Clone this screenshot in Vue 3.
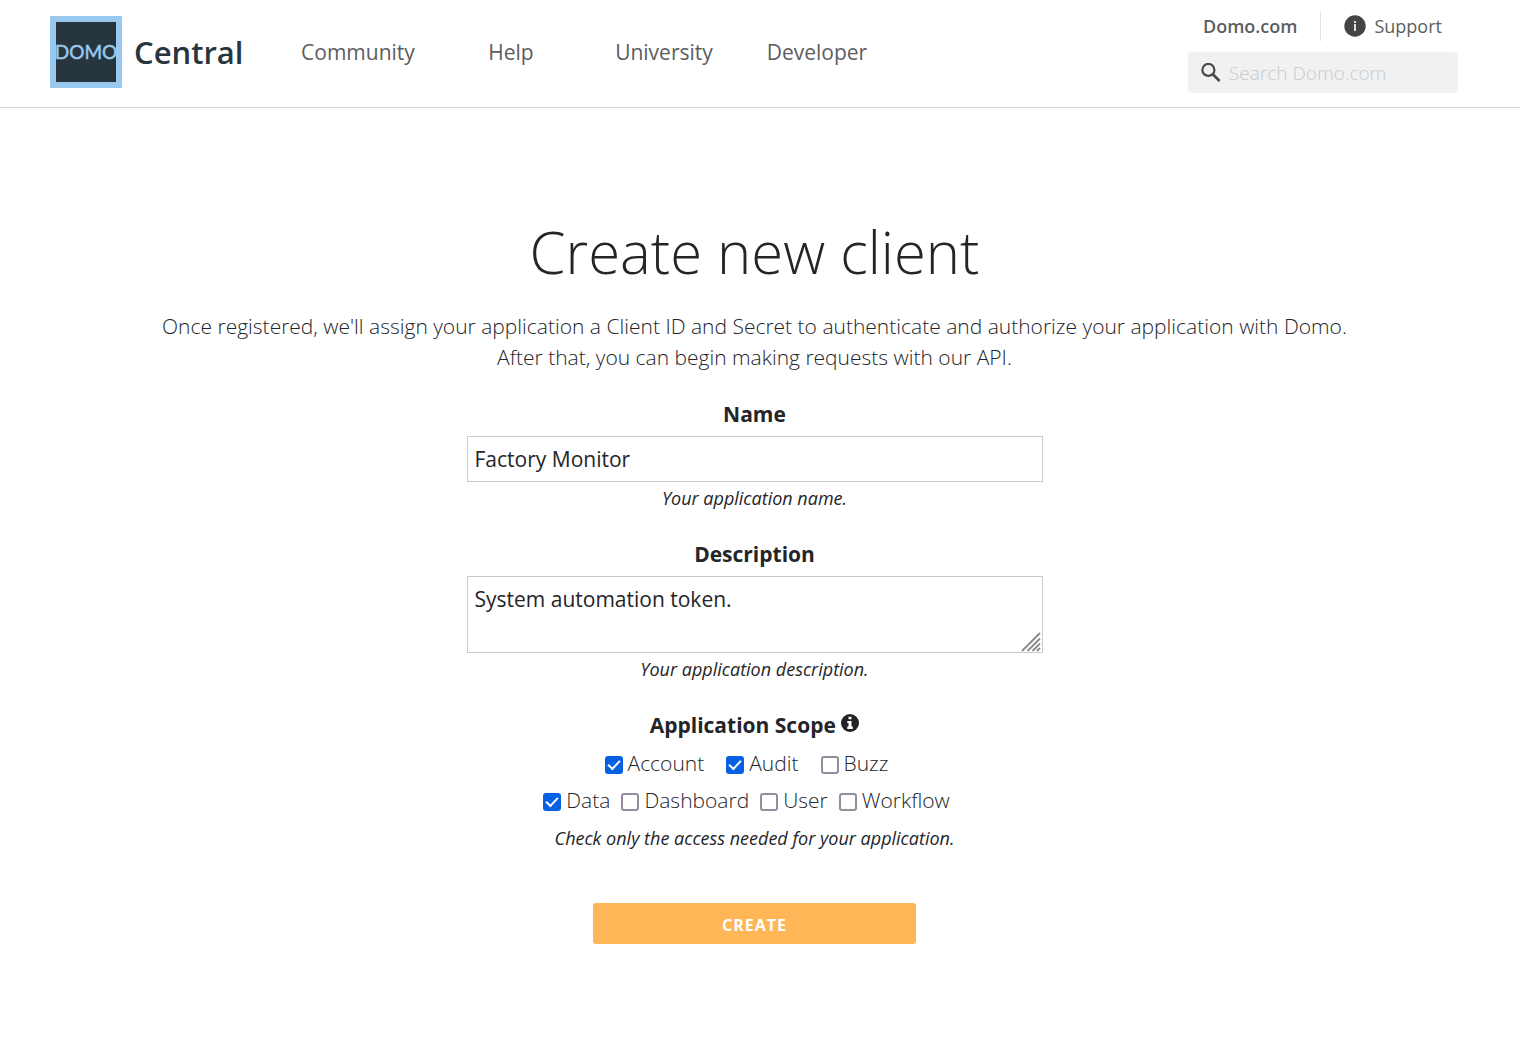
<script setup>
import { ref } from 'vue'

const links = ['Community', 'Help', 'University', 'Developer']
const search = ref('')
const name = ref('Factory Monitor')
const description = ref('System automation token.')
const scopeRows = ref([
  [
    { id: 'account', label: 'Account', checked: true },
    { id: 'audit', label: 'Audit', checked: true },
    { id: 'buzz', label: 'Buzz', checked: false }
  ],
  [
    { id: 'data', label: 'Data', checked: true },
    { id: 'dashboard', label: 'Dashboard', checked: false },
    { id: 'user', label: 'User', checked: false },
    { id: 'workflow', label: 'Workflow', checked: false }
  ]
])
</script>

<template>
  <header class="header">
    <a href="#" class="brand">
      <svg class="logo" viewBox="0 0 72 72" aria-hidden="true">
        <rect width="72" height="72" rx="1" fill="#99c9ee" />
        <rect x="6" y="6" width="60" height="60" fill="#27353e" />
        <text x="36" y="43" text-anchor="middle" class="logo-text" stroke="#99c9ee" stroke-width=".5">DOMO</text>
      </svg>
      <span class="brand-name">Central</span>
    </a>
    <nav class="nav">
      <a v-for="link in links" :key="link" href="#" class="nav-link">{{ link }}</a>
    </nav>
    <div class="tools">
      <div class="tool-links">
        <a href="#" class="domo-link">Domo.com</a>
        <a href="#" class="support">
          <svg width="22" height="22" viewBox="0 0 22 22" aria-hidden="true">
            <circle cx="11" cy="11" r="10.700" fill="#434446" />
            <rect x="10" y="6" width="2" height="2" fill="#ddd" />
            <rect x="10" y="9" width="2" height="7" fill="#ddd" />
          </svg>
          Support
        </a>
      </div>
      <label class="search">
        <svg width="20" height="20" viewBox="0 0 20 20" fill="none" stroke="#4a4a4c" aria-hidden="true">
          <circle cx="7.4" cy="6.9" r="6" stroke-width="2.2" />
          <path d="M11.8 11.300 18.600 17.900" stroke-width="2.800" />
        </svg>
        <input v-model="search" type="search" placeholder="Search Domo.com" aria-label="Search Domo.com" />
      </label>
    </div>
  </header>

  <main class="main">
    <h1 class="title">Create new client</h1>
    <p class="intro">
      Once registered, we'll assign your application a Client ID and Secret to authenticate and authorize your application with Domo.<br />
      After that, you can begin making requests with our API.
    </p>
    <form class="form" @submit.prevent>
      <div class="field">
        <label for="name" class="label">Name</label>
        <input id="name" v-model="name" type="text" class="control" />
        <p class="hint">Your application name.</p>
      </div>
      <div class="field">
        <label for="description" class="label">Description</label>
        <div class="area">
          <textarea id="description" v-model="description" class="control textarea"></textarea>
          <svg class="grip" width="20" height="20" viewBox="0 0 20 20" stroke="#8a8a8a" stroke-width="1.8" aria-hidden="true">
            <path d="M1 19 19 1M6.500 19 19 6.500M11.500 19 19 11.500M16 19 19 16" />
          </svg>
        </div>
        <p class="hint">Your application description.</p>
      </div>
      <fieldset class="field scope">
        <legend class="label">
          Application Scope
          <svg class="info" width="18" height="18" viewBox="0 0 18 18" aria-hidden="true">
            <circle cx="9" cy="9" r="9" fill="#222226" />
            <path d="M7.500 2.800h3v2.500h-3zM6.300 7h4.200v5.500h1.300V15H6.300v-2.500h1.200V9H6.300z" fill="#fff" />
          </svg>
        </legend>
        <div class="scope-rows">
          <div v-for="(row, i) in scopeRows" :key="i" class="scope-row" :class="{ tight: row.length > 3 }">
            <label v-for="item in row" :key="item.id" class="option">
              <input v-model="item.checked" type="checkbox" />
              {{ item.label }}
            </label>
          </div>
        </div>
        <p class="hint">Check only the access needed for your application.</p>
      </fieldset>
      <button type="submit" class="submit">CREATE</button>
    </form>
  </main>
</template>

<style>
body {
  margin: 0;
  background: #fff;
}
</style>

<style scoped>
.header,
.main,
.main input,
.main textarea,
.main button,
.search input {
  font-family: "Open Sans", "Noto Sans", sans-serif;
}
a {
  color: inherit;
  text-decoration: none;
}
.header {
  box-sizing: border-box;
  display: flex;
  align-items: flex-start;
  height: 108px;
  padding: 0 62px 0 50px;
  border-bottom: 1px solid #d2d2d2;
  color: #5c5d60;
}
.brand {
  display: flex;
  align-items: center;
  gap: 12px;
  margin-top: 16px;
}
.logo {
  width: 72px;
  height: 72px;
}
.logo-text {
  font: 400 19px Lato, sans-serif;
  fill: #99c9ee;
}
.brand-name {
  color: #27353e;
  font-size: 31px;
  font-weight: 600;
  line-height: 40px;
}
.nav {
  display: flex;
  margin: 36px 0 0 38px;
  font-size: 21px;
  line-height: 32px;
}
.nav-link {
  width: 153px;
  text-align: center;
}
.tools {
  width: 270px;
  margin-left: auto;
}
.tool-links {
  display: flex;
  margin: 11px 0;
  padding-left: 15px;
  font-size: 18px;
  line-height: 30px;
}
.domo-link {
  padding-right: 23px;
  border-right: 1px solid #e2e2e2;
  font-weight: 600;
}
.support {
  display: flex;
  align-items: center;
  gap: 8px;
  padding-left: 23px;
}
.search {
  box-sizing: border-box;
  display: flex;
  align-items: center;
  gap: 8px;
  height: 41px;
  padding: 0 13px;
  border-radius: 4px;
  background: #f1f1f1;
}
.search svg {
  flex: none;
}
.search input {
  flex: 1;
  min-width: 0;
  padding: 0;
  border: 0;
  outline: 0;
  background: none;
  font-size: 19px;
  font-weight: 300;
  line-height: 28px;
}
.search input::placeholder {
  color: #c8cacf;
}
.main {
  padding: 103px 11px 64px 0;
  color: #242529;
  text-align: center;
}
.title {
  margin: 0;
  font-size: 58px;
  font-weight: 300;
  line-height: 82px;
}
.intro {
  margin: 18px 0 23px;
  font-size: 21px;
  font-weight: 300;
  line-height: 31px;
}
.form {
  max-width: 576px;
  margin: 0 auto;
}
.field {
  margin: 0 0 21px;
  padding: 0;
  border: 0;
}
.label {
  display: block;
  margin-bottom: 4px;
  font-size: 21px;
  font-weight: 700;
  line-height: 36px;
}
.control {
  box-sizing: border-box;
  display: block;
  width: 100%;
  height: 46px;
  margin: 0;
  padding: 7px;
  border: 1px solid #cbcbcb;
  border-radius: 0;
  outline: 0;
  background: #fff;
  color: #242529;
  font-size: 21px;
  line-height: 30px;
}
.area {
  position: relative;
}
.textarea {
  height: 77px;
  resize: none;
}
.grip {
  position: absolute;
  right: 2px;
  bottom: 1px;
  pointer-events: none;
}
.hint {
  margin: 0;
  font-size: 18px;
  font-style: italic;
  line-height: 33px;
}
.scope {
  margin-bottom: 48px;
}
.scope .label {
  width: 100%;
  margin: 0;
  padding: 0;
}
.info {
  vertical-align: 1px;
}
.scope-rows {
  padding: 2px 16px 3px 0;
}
.scope-row {
  display: flex;
  justify-content: center;
  gap: 22px;
}
.scope-row.tight {
  gap: 11px;
}
.option {
  display: flex;
  align-items: center;
  gap: 5px;
  font-size: 21px;
  font-weight: 300;
  line-height: 37px;
}
.option input {
  appearance: none;
  box-sizing: border-box;
  display: grid;
  place-items: center;
  width: 18px;
  height: 18px;
  margin: 2px 0 0;
  border: 2px solid #8f8f9d;
  border-radius: 3px;
  background: #fff;
}
.option input:checked {
  border-color: #0561e2;
  background: #0561e2;
}
.option input:checked::after {
  content: "";
  box-sizing: border-box;
  width: 12px;
  height: 7px;
  margin-bottom: 3px;
  border: solid #fff;
  border-width: 0 0 2px 2px;
  transform: rotate(-47deg);
}
.submit {
  display: block;
  width: 56%;
  height: 41px;
  margin: 0 auto;
  padding: 3px 0 0;
  border: 0;
  border-radius: 3px;
  background: #ffb656;
  color: #fff;
  font-size: 16px;
  font-weight: 700;
  letter-spacing: 1px;
}
</style>
